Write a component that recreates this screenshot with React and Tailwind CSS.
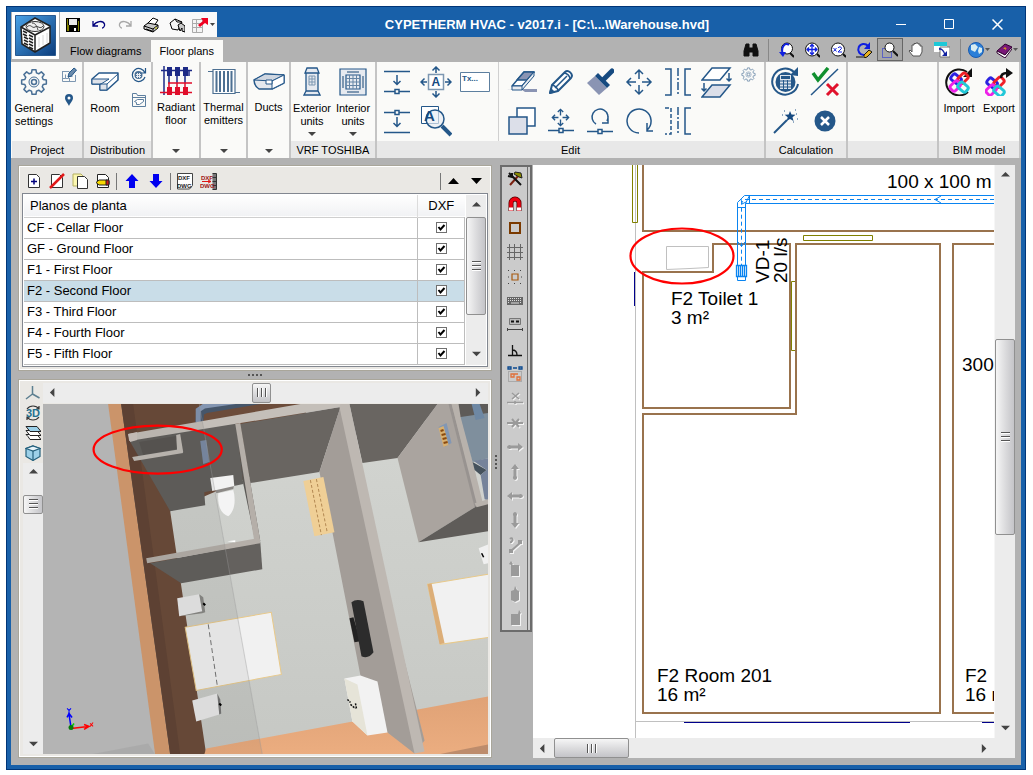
import { useState } from "react";

const floors = [
  "CF - Cellar Floor",
  "GF - Ground Floor",
  "F1 - First Floor",
  "F2 - Second Floor",
  "F3 - Third Floor",
  "F4 - Fourth Floor",
  "F5 - Fifth Floor",
];

function Svg({ w = 30, h = w, children, ...rest }) {
  return (
    <svg width={w} height={h} viewBox={`0 0 ${w} ${h}`} fill="none" stroke="#245789" strokeWidth="1.5" className="block shrink-0" {...rest}>
      {children}
    </svg>
  );
}

/* ---------- Ribbon buttons ---------- */

function IconButton({ label, className = "size-[39px]", children }) {
  return (
    <button type="button" aria-label={label} className={`flex items-center justify-center hover:bg-sky-100 ${className}`}>
      {children}
    </button>
  );
}

function BigButton({ icon, lines, arrow, className = "" }) {
  return (
    <button type="button" className={`flex flex-col items-center hover:bg-sky-100 ${className}`}>
      <span className="flex h-[40px] items-center justify-center">{icon}</span>
      {lines.map((line) => (
        <span key={line} className="block whitespace-nowrap">{line}</span>
      ))}
      {arrow && <Caret className="mt-1" />}
    </button>
  );
}

function Caret({ className = "" }) {
  return (
    <svg width="8" height="5" viewBox="0 0 8 5" className={`block ${className}`}>
      <path d="M0 0H8L4 4Z" fill="#444" />
    </svg>
  );
}

function Group({ title, className = "", children }) {
  return (
    <section className={`flex shrink-0 flex-col border-r-2 border-[#c4c4c4] bg-[#fafaf8] ${className}`}>
      <div className="flex flex-1">{children}</div>
      <h2 className="h-[17px] bg-[#e8e8e8] text-center leading-[18px]">{title}</h2>
    </section>
  );
}

function MenuGroup({ icon, lines, className }) {
  return (
    <section className={`flex shrink-0 flex-col items-center border-r-2 border-[#c4c4c4] bg-[#fafaf8] ${className}`}>
      <button type="button" className="flex w-full flex-1 flex-col items-center">
        <span className="flex h-[39px] items-center justify-center">{icon}</span>
        {lines.map((line) => (
          <span key={line} className="block">{line}</span>
        ))}
        <Caret className="mt-auto mb-1" />
      </button>
    </section>
  );
}

/* ---------- Ribbon icons ---------- */

// Eight flat teeth around the hub: outer radius 12.5, root radius 9.5
const gearPoints = Array.from({ length: 8 }, (_, i) =>
  [[-15, 9.5], [-9, 12.5], [9, 12.5], [15, 9.5]].map(([deg, r]) => {
    const a = ((i * 45 + deg) * Math.PI) / 180;
    return `${(14 + r * Math.sin(a)).toFixed(2)},${(14 - r * Math.cos(a)).toFixed(2)}`;
  }).join(" ")
).join(" ");

function Gear({ size = 28, color = "#4a7096" }) {
  return (
    <Svg w={size} viewBox="0 0 28 28" stroke={color} strokeLinejoin="round">
      <polygon points={gearPoints} />
      <circle cx="14" cy="14" r="5" strokeWidth="1" />
      <circle cx="14" cy="14" r="2.500" />
    </Svg>
  );
}

function PlanEdit() {
  return (
    <Svg w="16" stroke="#7d97b1" strokeWidth="1">
      <path d="M1.500 4.500h7M1.500 4v10.500h13V8M4.500 7.500v4h3v-2h4M1.500 11.500h3M8.500 14v-3" />
      <path d="M7 10l1-4 5-5 2.500 2-5 6z" fill="#6b8bab" stroke="#245789" />
    </Svg>
  );
}

function Pin() {
  return (
    <Svg w="10" h="14" stroke="none">
      <path d="M5 1a4 4 0 0 1 4 4c0 3-3 5-4 8C4 10 1 8 1 5a4 4 0 0 1 4-4z" fill="#245789" />
      <circle cx="5" cy="5" r="1.500" fill="#fff" />
    </Svg>
  );
}

function RoomIcon() {
  return (
    <Svg w="28" h="20" strokeLinejoin="round">
      <path d="M1 7L8 1H27V8L16 18H9V12H1z" fill="#fff" />
      <path d="M1 7H18L10 12H1zM9 12H16V18H9z" fill="#dfe3ea" strokeWidth="1" />
      <path d="M16 12L27 2" strokeWidth="1" />
    </Svg>
  );
}

function CalcSmall() {
  return (
    <Svg w="16" strokeWidth="1.200">
      <path d="M14 6A6.500 6.500 0 1 0 14 10M14.500 1v5h-4" />
      <circle cx="7.500" cy="8" r="4" fill="#4a7096" stroke="none" />
      <path d="M5 7.500h5M5 9.500h5M6.500 6v5M8.500 6v5" stroke="#e6eaf0" strokeWidth="1" />
    </Svg>
  );
}

function RoomSmall() {
  return (
    <Svg w="16" strokeWidth="1" stroke="#5d7f9f">
      <path d="M1.500 14.500v-13h4l1 2h8v11zM1.500 5.500h13" />
      <path d="M3.500 9.500l3-2h6v2l-4 3h-3v-2z" fill="#fff" />
    </Svg>
  );
}

function RadiantIcon() {
  return (
    <Svg w="32" h="32" strokeWidth="1.500">
      <path d="M1 4.500h31M4 0v29M29 4v6" stroke="#1d2a86" />
      <path d="M9 10v7M17 10v7M25 10v7" stroke="#1d2a86" />
      <path d="M8 17h24M9 17v4M17 17v4M25 17v4M0 26.500h32" stroke="#e00d2a" />
      <path d="M7 1h5v9H7zM15 1h5v9h-5zM23 1h5v9h-5z" fill="#1d2a86" stroke="none" />
      <path d="M7 21h5v8H7zM15 21h5v8h-5zM23 21h5v8h-5z" fill="#e00d2a" stroke="none" />
    </Svg>
  );
}

function RadiatorIcon() {
  return (
    <Svg w="32" h="28" strokeWidth="1.200" stroke="#4d7092">
      <path d="M0 3.500h5M27 24.500h5" />
      <path d="M5 1.500h22v24H5z" fill="#fff" />
      <path d="M8.500 3v21M12 3v21M16 3v21M20 3v21M23.500 3v21" strokeWidth="2" />
    </Svg>
  );
}

function DuctIcon() {
  return (
    <Svg w="32" h="18" strokeLinejoin="round">
      <path d="M1 7L12 1l19 1v8l-12 6H6C3 14 1 12 1 7z" fill="#e4e8ee" />
      <path d="M1 7L12 1l19 1-12 6z" fill="#cfd6e0" strokeWidth="1" />
      <path d="M19 8v8l12-6V2z" fill="#fff" strokeWidth="1" />
      <path d="M13 7h6v4h-6z" fill="#fff" strokeWidth="1" />
    </Svg>
  );
}

function ExteriorIcon() {
  return (
    <Svg w="18" h="30" strokeWidth="1.300">
      <path d="M4 1h10l2 5H2zM3 6h12v18H3zM3 24L1 28h16l-2-4z" fill="#e6eaf0" />
      <path d="M6 9h6v9H6zM9 9v9M6 12h6M6 15h6" strokeWidth="1" stroke="#7d97b1" />
    </Svg>
  );
}

function InteriorIcon() {
  return (
    <Svg w="28" strokeWidth="1.200">
      <path d="M1 1h26v26H1z" fill="#e6eaf0" />
      <path d="M4 8v12M24 8v12M8 4h12M8 24h12" strokeWidth="2" stroke="#7d97b1" />
      <path d="M7 7h14v14H7z" fill="#e6eaf0" />
      <path d="M10.500 7v14M14 7v14M17.500 7v14M7 10.500h14M7 14h14M7 17.500h14" strokeWidth="1" stroke="#6585a5" />
    </Svg>
  );
}

const InsertDown = () => (
  <Svg w="26">
    <path d="M0 2.500h26M13 6v9M9.500 12l3.500 3.500 3.500-3.500M0 22.500h11M15 22.500h11M11 20.500h4v4h-4z" />
  </Svg>
);

const InsertUp = () => (
  <Svg w="26">
    <path d="M0 4.500h11M15 4.500h11M11 2.500h4v4h-4zM13 9v9M9.500 15l3.500 3.500 3.500-3.500M0 24.500h26" />
  </Svg>
);

const MoveText = () => (
  <Svg w="32">
    <path d="M8.500 8.500h15v15h-15z" fill="#fff" stroke="#7d97b1" />
    <path d="M16 7V1M12.500 4.500L16 1l3.500 3.500M16 25v6M12.500 27.500L16 31l3.500-3.500M7 16H1M4.500 12.500L1 16l3.500 3.500M25 16h6M27.500 12.500L31 16l-3.500 3.500" />
    <text x="11.500" y="20" fontSize="12" fontWeight="bold" fontFamily="Liberation Sans, sans-serif" fill="#164a80" stroke="none">A</text>
  </Svg>
);

const TextBox = () => (
  <Svg w="30" h="20" strokeWidth="1">
    <path d="M.5 .5h29v19h-29z" fill="#fff" stroke="#5d7f9f" />
    <text x="2" y="9" fontSize="8" fontWeight="bold" fontFamily="Liberation Sans, sans-serif" fill="#245789" stroke="none">Tx...</text>
  </Svg>
);

const FindText = () => (
  <Svg w="32">
    <path d="M1.500 1.500h17v17h-17z" fill="#fff" strokeWidth="1" />
    <circle cx="15" cy="14" r="9" fill="#e8edf3" fillOpacity=".7" />
    <text x="4" y="15.500" fontSize="15" fontWeight="bold" fontFamily="Liberation Sans, sans-serif" fill="#164a80" stroke="none">A</text>
    <path d="M22 21l9 9" strokeWidth="4" />
  </Svg>
);

const Eraser = () => (
  <Svg w="30" h="24" strokeLinejoin="round">
    <path d="M0 19h30v3H18l-3-2z" fill="#8a94b3" stroke="none" />
    <path d="M5 16L17 2h10L15 16z" fill="#fff" />
    <path d="M10 10L17 2h10l-7 8z" fill="#8a94b3" />
    <path d="M5 16H15V20H5zM15 16L27 2V6L15 20" fill="#e8ebf0" strokeWidth="1" />
  </Svg>
);

const Pencil = () => (
  <Svg w="26" strokeLinejoin="round">
    <path d="M2 24l2-8L17 3c3-3 9 2 6 6L10 22z" fill="#fff" strokeWidth="2" />
    <path d="M7 19L19 7M16 4c3 0 6 3 6 6M4 16c2 0 6 3 6 6" />
    <path d="M2 24l1-4 3 3z" fill="#245789" />
  </Svg>
);

const Brush = () => (
  <Svg w="28">
    <path d="M1 15L9 8l12 12-8 7z" fill="#8a94b3" stroke="none" />
    <path d="M18 11l8-8" strokeWidth="5" strokeLinecap="round" stroke="#164a80" />
    <path d="M9 8l3-3 12 12-3 3z" fill="#164a80" stroke="none" />
  </Svg>
);

const Move = ({ s = 28 }) => (
  <Svg w={s} viewBox="0 0 28 28" strokeWidth={s < 20 ? 2 : 1.5}>
    <path d="M14 11V2M10 6l4-4 4 4M14 17v9M10 22l4 4 4-4M11 14H2M6 10l-4 4 4 4M17 14h9M22 10l4 4-4 4" />
  </Svg>
);

const Mirror = ({ dashed }) => (
  <Svg w="26" h="28">
    <path d="M0 1h6v26H0" strokeDasharray={dashed ? "4 2" : undefined} />
    <path d="M13 0v28" strokeDasharray="8 2 2 2" />
    <path d="M26 1h-6v26h6" />
  </Svg>
);

const CopyFloor = () => (
  <Svg w="32" h="32">
    <path d="M1 14L11 2h18L19 14z" fill="#fff" />
    <path d="M1 31l10-12h18L19 31z" fill="#dcdfe9" />
    <path d="M28 7v8M25.500 12.500L28 15l2.500-2.500M3 17v8M.500 22.500L3 25l2.500-2.500" />
  </Svg>
);

const CopyIcon = () => (
  <Svg w="28">
    <path d="M9 1h18v18H9z" fill="#fff" />
    <path d="M1 10h18v17H1z" fill="#dcdfe9" />
  </Svg>
);

const MoveNode = () => (
  <div className="flex flex-col items-center">
    <Move s={19} />
    <Svg w="26" h="7"><path d="M0 3.500h11M15 3.500h11M11 1.500h4v4h-4z" /></Svg>
  </div>
);

const RotateNode = () => (
  <Svg w="26" h="28">
    <path d="M9 17A8 8 0 1 1 20 14M21 9v7h-6" />
    <path d="M0 24.500h11M15 24.500h11M11 22.500h4v4h-4z" />
  </Svg>
);

const Rotate = () => (
  <Svg w="28">
    <path d="M14 26A12 12 0 1 1 22 23M22 16v8h7" />
  </Svg>
);

const CalcIcon = () => (
  <Svg w="30" strokeWidth="2">
    <path d="M27 17A13 13 0 1 1 23 5" />
    <path d="M27 0v9l-8-1z" fill="#245789" stroke="none" />
    <circle cx="14.500" cy="15" r="10" fill="#245789" stroke="none" />
    <path d="M9 8h11v14H9z" fill="#dde4ec" stroke="none" />
    <path d="M10 9h9v3h-9z" fill="#245789" stroke="none" />
    <path d="M9 14h11M9 17h11M9 20h11M12.500 13v9M16.500 13v9" strokeWidth="1" />
  </Svg>
);

const CheckIcon = () => (
  <Svg w="30">
    <path d="M1 28L28 2" />
    <path d="M3 6l5 7L18 1" stroke="#0f8f2e" strokeWidth="3.500" />
    <path d="M17 17l11 11M28 17L17 28" stroke="#e0122c" strokeWidth="3" />
  </Svg>
);

const Wand = () => (
  <Svg w="26">
    <path d="M1 25L14 12" strokeWidth="2" />
    <path d="M17 3l1.500 3.500 4 .3-3 2.500 1 3.700-3.500-2-3.300 2 1-3.800-3-2.500 4-.2z" fill="#164a80" stroke="none" />
    <path d="M11 3h1M22 2h1M24 11h1M9 7h1M23 6h1M20 14h1" strokeWidth="1" />
  </Svg>
);

const Cancel = () => (
  <Svg w="22" stroke="none">
    <circle cx="11" cy="11" r="10.500" fill="#245789" />
    <path d="M7 7l8 8M15 7l-8 8" stroke="#fff" strokeWidth="2.500" />
  </Svg>
);

function BimKnot() {
  return (
    <g fill="none" strokeWidth="2.500" transform="translate(-2 -2) scale(1.150)">
      <rect x="7" y="8" width="9" height="6" rx="2" transform="rotate(40 11 11)" stroke="#2b22e0" />
      <rect x="13" y="8" width="9" height="6" rx="2" transform="rotate(-45 17 11)" stroke="#f02028" />
      <rect x="6" y="14" width="9" height="6" rx="2" transform="rotate(-45 11 17)" stroke="#ee22e8" />
      <rect x="13" y="15" width="9" height="6" rx="2" transform="rotate(40 17 18)" stroke="#22c8d8" />
    </g>
  );
}

const ImportIcon = () => (
  <Svg w="28" stroke="#111" strokeWidth="2">
    <path d="M23 24A13 13 0 1 1 22 4" />
    <path d="M27 0v9h-9z" fill="#111" stroke="none" />
    <BimKnot />
  </Svg>
);

const ExportIcon = () => (
  <Svg w="28" stroke="#111" strokeWidth="2.500">
    <g transform="translate(-4 4)"><BimKnot /></g>
    <path d="M16 10c0-4 3-5 6-5" />
    <path d="M21 0l7 5-7 5z" fill="#111" stroke="none" />
  </Svg>
);

/* ---------- 16px toolbar icons ---------- */

const glyphs = {
  save: <g stroke="none"><path d="M1 1h14v14H1z" fill="#000" /><path d="M2 2h1v8H2zM13 4h1v10h-1zM2 8h2v6H2z" fill="#808000" /><path d="M4 2h8v6H4z" fill="#e8e8e8" /><path d="M9 11h2v3H9z" fill="#fff" /></g>,
  undo: <path d="M2 4v5h5M2.500 8.500C5 4 12 3 13.500 7c.5 2-1 4-2.500 4" stroke="#00007c" strokeWidth="1.300" />,
  redo: <path d="M14 4v5H9M13.500 8.500C11 4 4 3 2.500 7c-.5 2 1 4 2.500 4" stroke="#a8a8a8" strokeWidth="1.300" />,
  print: <g stroke="#000" strokeWidth="1"><path d="M4 7l6-6 5 2-4 6z" fill="#fff" /><path d="M1 9l4-3 10 2v3l-5 4-9-3z" fill="#c8c8c8" /><path d="M1 9l9 3 5-4M10 12v3M3 12l6 2" /><path d="M12 11h2" stroke="#cc0" /></g>,
  preview: <g stroke="#000" strokeWidth="1"><path d="M1 6l5-4 7 3-4 8-6-1z" fill="#f4f4f4" /><path d="M6 2l2 3 5 0" /><path d="M9 8l3-2 4 3v6l-3-1v-3l-2 3z" fill="#c8c8c8" /></g>,
  send: <g stroke="#aaa" strokeWidth="1"><path d="M.5 2.500h10v13H.5zM.5 6.500h10M.5 10.500h10M4.500 2.500v13" fill="#f4f4f4" /><path d="M6 8l5-4-2-3h7v7l-3-2-5 4z" fill="#f00020" stroke="none" /></g>,
  binoculars: <path d="M3 2h3v4h4V2h3l2 7v5h-5v-4H6v4H1V9z" fill="#111" stroke="#111" strokeWidth="1" />,
  zoomPrev: <g stroke="#111" strokeWidth="1"><circle cx="9" cy="6.500" r="5.500" fill="#fff" /><path d="M12 11l4 4" strokeWidth="2" /><path d="M11 3C7 0 3 5 4.500 11" stroke="#1020e0" strokeWidth="2" /><path d="M1 10h7l-3 5z" fill="#1020e0" stroke="none" /></g>,
  zoomAll: <g stroke="#111" strokeWidth="1"><circle cx="8" cy="7.500" r="6.500" fill="#fff" /><path d="M13 12l3 3" strokeWidth="2" /><path d="M8 3v9M3.500 7.500h9M6 4.500l2-2 2 2M6 10.500l2 2 2-2M5 5.500l-2 2 2 2M11 5.500l2 2-2 2" stroke="#1020e0" strokeWidth="1.300" /></g>,
  zoom2: <g stroke="#111" strokeWidth="1"><circle cx="8" cy="7.500" r="6.500" fill="#fff" /><path d="M13 12l3 3" strokeWidth="2" /><path d="M3.500 6l3 3.500M6.500 6l-3 3.500M8 6c1-2 4-1 3.500 .5L8 10h4" stroke="#1020e0" /></g>,
  redraw: <g><path d="M8 13A5.500 5.500 0 1 1 12 4" stroke="#1020e0" strokeWidth="2" /><path d="M14 0v7H8z" fill="#1020e0" stroke="none" /><path d="M8 13l5-5 3 2-5 5-3 1z" fill="#e8b020" stroke="#111" strokeWidth="1" /><path d="M0 15h7" stroke="#111" strokeWidth="1" /></g>,
  zoomWin: <g stroke="#111" strokeWidth="1"><path d="M.5 6.500h9v9h-9z" stroke="#1020e0" strokeDasharray="1 1" /><circle cx="7.500" cy="5.500" r="4.500" fill="#fff" /><path d="M11 9l5 5" strokeWidth="2" /></g>,
  hand: <path d="M5 14L1 9l1-1 2 2V3h2V1.500h2V1h2v1h2v2h2v6l-2 4z" fill="#fff" stroke="#555" strokeWidth="1" />,
  windows: <g stroke="none"><path d="M0 0h13v10H0z" fill="#fff" /><path d="M0 0h13v4H0z" fill="#1cc8d8" /><path d="M6 5h10v10H6z" fill="#fff" stroke="#777" strokeWidth="1" /><path d="M5 6c3 0 5 2 6 5l2-2v5H8l2-2C9 9 7 7 5 8z" fill="#1020a0" /></g>,
  globe: <g><circle cx="8" cy="8" r="7.500" fill="#2b7fd8" stroke="#1a5bb0" strokeWidth="1" /><path d="M3 3l4-1 3 3-3 5-4-2zM11 5l3 1v4l-3 2-1-3z" fill="#d8ecf0" stroke="none" /></g>,
  book: <g stroke="#300030" strokeWidth="1"><path d="M1 9l8-7 7 3-7 8z" fill="#7a1878" /><path d="M1 9l8 4 7-8v2l-7 9-8-5z" fill="#fff" /><path d="M8 7c0-2 3-1 1.500 .5" stroke="#fc0" /></g>,
  add: <g stroke="#333" strokeWidth="1"><path d="M2.500 1.500h8l3 3v10h-11z" fill="#fff" /><path d="M5 8.500h6M8 5.500v6" stroke="#00007c" strokeWidth="1.500" /></g>,
  remove: <g stroke="#333" strokeWidth="1"><path d="M2.500 1.500h8l3 3v10h-11z" fill="#fff" /><path d="M1 15L15 1" stroke="#e01818" strokeWidth="2.500" /></g>,
  copy: <g stroke="#333" strokeWidth="1"><path d="M1 1h8l2 2v10H1z" fill="#fbf7b0" stroke="#b5b060" /><path d="M5.500 3.500h7l3 3v9h-10z" fill="#fff" /></g>,
  edit: <g stroke="#222" strokeWidth="1"><path d="M2.500 1.500h8l3 3v10h-11z" fill="#fff" /><path d="M1 9.500l3-2.500h8l2 1v3l-2 1H4z" fill="#f7d800" /><path d="M11 7h3v5h-3z" fill="#d01818" /></g>,
  up: <path d="M8 1l6.500 7H11v7H5V8H1.500z" fill="#0000f0" stroke="none" />,
  down: <path d="M8 15L1.500 8H5V1h6v7h3.500z" fill="#0000f0" stroke="none" />,
};

function Glyph({ name, w = 16 }) {
  return <Svg w={w} viewBox="0 0 16 16">{glyphs[name]}</Svg>;
}

function DxfGlyph({ red }) {
  const color = red ? "#a01414" : "#222";
  return (
    <Svg w="17" h="17" strokeWidth="1">
      {red ? <path d="M12.500 .5h4v16h-4M12.500 4.500h4M12.500 8.500h4M12.500 12.500h4" fill="#777" stroke="#333" /> : <path d="M.5 .5h15v12l-3 3.500H.5z" fill="#fff" stroke="#444" />}
      {red && <path d="M2 8.500h9M8 7l3 1.500L8 10" stroke="#e01414" />}
      <g fontFamily="Liberation Sans, sans-serif" fontSize="6" fontWeight="bold" fill={color} stroke="none">
        <text x="1" y="7">DXF</text>
        <text x="0" y="15">DWG</text>
      </g>
    </Svg>
  );
}

/* ---------- Scrollbars ---------- */

const arrows = { up: "M0 6L5 1L10 6Z", down: "M0 2H10L5 7Z", left: "M6 0V10L1 5Z", right: "M2 0V10L7 5Z" };

function Arrow({ dir, color = "#444" }) {
  return (
    <svg width="9" height="9" viewBox="0 0 10 10" className="block">
      <path d={arrows[dir]} fill={color} />
    </svg>
  );
}

function VScroll({ before, thumb, after, className = "w-5" }) {
  return (
    <div className={`flex shrink-0 flex-col bg-[#ececec] ${className}`}>
      <button type="button" aria-label="Scroll up" className="flex h-5 items-center justify-center"><Arrow dir="up" /></button>
      <div className={before} />
      <div className={`flex flex-col items-center justify-center gap-[2px] rounded-xs border border-[#909090] bg-linear-to-r from-[#f6f6f6] via-[#dcdcde] to-[#c4c4c8] ${thumb}`}>
        {[0, 1, 2].map((i) => <span key={i} className="h-[2px] w-[9px] border-t border-[#555] bg-white" />)}
      </div>
      <div className={after} />
      <button type="button" aria-label="Scroll down" className="flex h-5 items-center justify-center"><Arrow dir="down" /></button>
    </div>
  );
}

function HScroll({ before, thumb, after }) {
  return (
    <div className="flex h-5 min-w-0 flex-1 bg-[#ececec]">
      <button type="button" aria-label="Scroll left" className="flex w-5 items-center justify-center"><Arrow dir="left" /></button>
      <div className={before} />
      <div className={`flex items-center justify-center gap-[2px] rounded-xs border border-[#909090] bg-linear-to-b from-[#f6f6f6] via-[#dcdcde] to-[#c4c4c8] ${thumb}`}>
        {[0, 1, 2].map((i) => <span key={i} className="h-[9px] w-[2px] border-l border-[#555] bg-white" />)}
      </div>
      <div className={after} />
      <button type="button" aria-label="Scroll right" className="flex w-5 items-center justify-center"><Arrow dir="right" /></button>
    </div>
  );
}

/* ---------- Header ---------- */

function Header() {
  const [tab, setTab] = useState("Floor plans");
  return (
    <header className="flex bg-[#b2b2b2]">
      <div className="w-[49px] border-t-5 border-[#1860a9] pl-px">
        <button type="button" aria-label="Application menu" className="flex size-[47px] items-center justify-center bg-white">
          <svg width="41" height="41" viewBox="0 0 41 41">
            <defs>
              <linearGradient id="app" x2="1" y2="1"><stop stopColor="#4ba3e8" /><stop offset="1" stopColor="#0b3c7c" /></linearGradient>
            </defs>
            <path d="M.5 .5h40v40H.5z" fill="url(#app)" stroke="#2a5a90" />
            <path d="M6 12L20 3l15 8v17L20 37 7 29z" fill="#fff" stroke="#222" strokeWidth="1.500" strokeLinejoin="round" />
            <path d="M6 12l14 8v17M20 20l15-8" fill="none" stroke="#222" strokeWidth="1.500" />
            <ellipse cx="20" cy="11.500" rx="9" ry="5" fill="#eee" stroke="#333" />
            <path d="M12 12c4-4 5 2 8 0s5 3 8-1M17 8c4 0 5 4 6 7" fill="none" stroke="#444" />
            <path d="M8 16l4 2M14 20l4 2M8 19l4 2M14 23l4 2M9 22l4 2M14 26l4 2M9 25l4 2M14 29l4 2M9 28l4 2M14 32l4 2" stroke="#222" strokeWidth="1.500" />
            <path d="M24 22v10M28 20v10M32 18v10" stroke="#d8d8d8" />
          </svg>
        </button>
      </div>
      <div className="min-w-0 flex-1">
        <div className="flex h-[30px] bg-[#1860a9]">
          <div className="mt-[5px] flex w-[157px] items-center bg-[#f9f9f9]">
            {["save", "undo", "redo", "print", "preview"].map((name) => (
              <IconButton key={name} label={name} className="h-6 w-[26px]"><Glyph name={name} /></IconButton>
            ))}
            <button type="button" aria-label="Export list" className="flex items-center gap-[2px] pl-[2px]">
              <Glyph name="send" />
              <svg width="5" height="4" viewBox="0 0 5 4"><path d="M0 0h5L2.500 3z" fill="#444" /></svg>
            </button>
          </div>
          <h1 className="min-w-0 flex-1 truncate pt-[5px] text-center text-[13px] leading-[26px] font-bold text-white">
            CYPETHERM HVAC - v2017.i - [C:\...\Warehouse.hvd]
          </h1>
          <div className="flex pt-[4px]">
            <IconButton label="Minimize" className="h-[26px] w-12"><Svg w="11" stroke="#fff" strokeWidth="1"><path d="M0 5.500h10" /></Svg></IconButton>
            <IconButton label="Maximize" className="h-[26px] w-12"><Svg w="11" stroke="#fff" strokeWidth="1"><path d="M.5 .5h9v9h-9z" /></Svg></IconButton>
            <IconButton label="Close" className="h-[26px] w-12"><Svg w="11" stroke="#fff"><path d="M.5 .5l10 10M10.500 .5l-10 10" /></Svg></IconButton>
          </div>
        </div>
        <div className="flex h-[25px]">
          <nav className="flex items-end pl-px">
            {["Flow diagrams", "Floor plans"].map((name) => (
              <button
                key={name}
                type="button"
                onClick={() => setTab(name)}
                className={`h-[22px] px-[9px] text-[11px] ${tab === name ? "bg-[#fafaf8]" : ""}`}
              >
                {name}
              </button>
            ))}
          </nav>
          <div className="ml-auto flex items-center">
            <IconButton label="Search" className="h-[23px] w-[26px]"><Glyph name="binoculars" /></IconButton>
            <span className="mx-1 h-[22px] w-px bg-[#888]" />
            {["zoomPrev", "zoomAll", "zoom2", "redraw", "zoomWin", "hand", "windows"].map((name) => (
              <IconButton
                key={name}
                label={name}
                className={name === "zoomWin" ? "h-[23px] w-[26px] border border-[#666] bg-[#a6a6a6]" : "h-[23px] w-[26px]"}
              >
                <Glyph name={name} />
              </IconButton>
            ))}
            <span className="mr-1 ml-[5px] h-[22px] w-px bg-[#888]" />
            {["globe", "book"].map((name) => (
              <button key={name} type="button" aria-label={name} className="flex w-[28px] items-center justify-center gap-px">
                <Glyph name={name} />
                <svg width="5" height="4" viewBox="0 0 5 4"><path d="M0 0h5L2.500 3z" fill="#555" /></svg>
              </button>
            ))}
          </div>
        </div>
      </div>
    </header>
  );
}

function Ribbon() {
  return (
    <div className="flex h-[96px] overflow-hidden bg-[#fafaf8] pl-px text-[11px] leading-[13px]">
      <Group title="Project" className="w-[72px]">
        <BigButton icon={<Gear />} lines={["General", "settings"]} className="w-[44px]" />
        <div className="flex flex-col">
          <IconButton label="Edit plan" className="size-[25px]"><PlanEdit /></IconButton>
          <IconButton label="Location" className="size-[25px]"><Pin /></IconButton>
        </div>
      </Group>
      <Group title="Distribution" className="w-[69px]">
        <BigButton icon={<RoomIcon />} lines={["Room"]} className="w-[42px]" />
        <div className="flex flex-col">
          <IconButton label="Recalculate room" className="size-[25px]"><CalcSmall /></IconButton>
          <IconButton label="Room library" className="size-[25px]"><RoomSmall /></IconButton>
        </div>
      </Group>
      <MenuGroup icon={<RadiantIcon />} lines={["Radiant", "floor"]} className="w-[48px]" />
      <MenuGroup icon={<RadiatorIcon />} lines={["Thermal", "emitters"]} className="w-[47px]" />
      <MenuGroup icon={<DuctIcon />} lines={["Ducts"]} className="w-[43px]" />
      <Group title="VRF TOSHIBA" className="w-[86px]">
        <BigButton icon={<ExteriorIcon />} lines={["Exterior", "units"]} arrow className="w-[42px]" />
        <BigButton icon={<InteriorIcon />} lines={["Interior", "units"]} arrow className="w-[40px]" />
      </Group>
      <Group title="Edit" className="w-[389px]">
        <div className="grid grid-cols-3 content-start">
          <IconButton label="Insert below"><InsertDown /></IconButton>
          <IconButton label="Move text"><MoveText /></IconButton>
          <IconButton label="Text box"><TextBox /></IconButton>
          <IconButton label="Insert above"><InsertUp /></IconButton>
          <IconButton label="Find text"><FindText /></IconButton>
        </div>
        <span className="mr-[3px] ml-1 w-px bg-[#d0d0d0]" />
        <div className="grid grid-cols-6 content-start">
          <IconButton label="Delete"><Eraser /></IconButton>
          <IconButton label="Edit"><Pencil /></IconButton>
          <IconButton label="Match properties"><Brush /></IconButton>
          <IconButton label="Move"><Move /></IconButton>
          <IconButton label="Mirror"><Mirror /></IconButton>
          <IconButton label="Copy between floors"><CopyFloor /></IconButton>
          <IconButton label="Copy"><CopyIcon /></IconButton>
          <IconButton label="Move node"><MoveNode /></IconButton>
          <IconButton label="Rotate node"><RotateNode /></IconButton>
          <IconButton label="Rotate"><Rotate /></IconButton>
          <IconButton label="Mirror copy"><Mirror dashed /></IconButton>
        </div>
        <IconButton label="Options" className="size-[25px]"><Gear size={15} color="#6a89a8" /></IconButton>
      </Group>
      <Group title="Calculation" className="w-[82px]">
        <div className="grid grid-cols-2 content-start">
          <IconButton label="Calculate"><CalcIcon /></IconButton>
          <IconButton label="Check"><CheckIcon /></IconButton>
          <IconButton label="Wizard"><Wand /></IconButton>
          <IconButton label="Cancel"><Cancel /></IconButton>
        </div>
      </Group>
      <Group title="" className="min-w-0 flex-1 shrink" />
      <Group title="BIM model" className="w-[82px]">
        <BigButton icon={<ImportIcon />} lines={["Import"]} className="w-[40px]" />
        <BigButton icon={<ExportIcon />} lines={["Export"]} className="w-[40px]" />
      </Group>
    </div>
  );
}

/* ---------- Floor list ---------- */

function FloorList() {
  const [selected, setSelected] = useState(3);
  return (
    <section className="border border-[#a9a69a] bg-[#eae8e4]">
      <div className="border border-white p-[2px]">
        <div className="flex h-[24px] items-center">
          {["add", "remove", "copy", "edit"].map((name) => (
            <IconButton key={name} label={name} className="h-[22px] w-[23px]"><Glyph name={name} /></IconButton>
          ))}
          <span className="mx-[2px] h-[17px] w-px bg-[#777]" />
          <IconButton label="Move up" className="h-[22px] w-[25px]"><Glyph name="up" /></IconButton>
          <IconButton label="Move down" className="h-[22px] w-[23px]"><Glyph name="down" /></IconButton>
          <span className="mx-[3px] h-[17px] w-px bg-[#777]" />
          <IconButton label="DXF templates" className="h-[22px] w-[23px]"><DxfGlyph /></IconButton>
          <IconButton label="DXF layers" className="h-[22px] w-[23px]"><DxfGlyph red /></IconButton>
          <span className="ml-auto h-[17px] w-px bg-[#777]" />
          <IconButton label="Previous floor" className="h-[22px] w-[24px]"><Svg w="11" h="6" stroke="none"><path d="M0 6h11L5.500 0z" fill="#000" /></Svg></IconButton>
          <IconButton label="Next floor" className="h-[22px] w-[23px]"><Svg w="11" h="6" stroke="none"><path d="M0 0h11L5.500 6z" fill="#000" /></Svg></IconButton>
        </div>
        <div className="flex border border-[#828790] bg-white p-px">
          <table className="flex-1 table-fixed border-collapse text-[13px]">
            <thead>
              <tr className="h-[22px] border-b border-[#cfcfcf] bg-linear-to-b from-white to-[#f1f2f4]">
                <th className="border-r border-[#dcdcdc] pl-[6px] text-left font-normal">Planos de planta</th>
                <th className="w-[47px] font-normal">DXF</th>
              </tr>
            </thead>
            <tbody>
              {floors.map((floor, i) => (
                <tr
                  key={floor}
                  onClick={() => setSelected(i)}
                  className={`h-[21px] border-b border-[#bdbdbd] ${i === selected ? "bg-[#c9dde8]" : ""}`}
                >
                  <td className="border-r border-[#bdbdbd] pl-[3px] leading-[20px]">{floor}</td>
                  <td className="border-r border-[#bdbdbd]">
                    <span className="relative mx-auto block size-[11px]">
                      <input type="checkbox" defaultChecked aria-label={`DXF ${floor}`} className="peer block size-[11px] appearance-none border border-[#707070] bg-white" />
                      <svg width="11" height="11" viewBox="0 0 11 11" className="pointer-events-none absolute inset-0 hidden peer-checked:block">
                        <path d="M2.500 5l2 2.500L8.500 3" fill="none" stroke="#000" strokeWidth="2" />
                      </svg>
                    </span>
                  </td>
                </tr>
              ))}
            </tbody>
          </table>
          <VScroll before="h-[2px]" thumb="h-[98px]" after="flex-1" className="ml-px w-5" />
        </div>
      </div>
    </section>
  );
}

/* ---------- 3D view ---------- */

function Scene() {
  return (
    <svg viewBox="43 404 445 350" preserveAspectRatio="xMinYMin slice" className="absolute inset-0 size-full bg-[#b4b4b4]">
      <defs>
        <linearGradient id="floor" x2="0" y2="1"><stop stopColor="#d3d5d1" /><stop offset="1" stopColor="#c6c8c4" /></linearGradient>
        <linearGradient id="ground" x2="0" y2="1"><stop stopColor="#e0a276" /><stop offset="1" stopColor="#ebad80" /></linearGradient>
      </defs>
      <path d="M90 754L148 743 155 754z" fill="#aaa" />
      {/* outer wall */}
      <path d="M108 404H121L170 754H155z" fill="#cb946a" />
      <path d="M121 404H310L260 500 206 754H170z" fill="#6c4c3a" />
      <path d="M121 404H133L180 754H170z" fill="#624536" />
      {/* floors */}
      <path d="M170 511L242 480 330 440 488 404V754H206z" fill="url(#floor)" />
      <path d="M206 748L488 696V754H204z" fill="url(#ground)" />
      <path d="M437 754L488 744V754z" fill="#bd8c6c" />
      {/* toilet walls */}
      <path d="M129 440L236 422 243 484 204 492 205 505 170 511z" fill="#62605d" />
      <path d="M236 424L240 424 260 541 255 541 243 484z" fill="#5a5855" />
      <path d="M139 442L176 436 177 449 143 455z" fill="#5a5754" />
      <path d="M176 435L180 434 183 452 177 453z" fill="#c1bcb6" />
      <path d="M132 457L181 449 183 453 134 461z" fill="#c1bcb6" />
      <path d="M200 441L206 440 209 462 203 464z" fill="#7c8ca5" />
      <path d="M240 424L340 407 319 472 250 483z" fill="#696561" />
      <path d="M235 424L240 423 260 541 254 541z" fill="#b5afa9" />
      {/* duct over the corridor */}
      <path d="M199 423L200 412 206 409 260 400" fill="none" stroke="#46566a" strokeWidth="8" />
      <path d="M198 422L198 410 204 406 260 398" fill="none" stroke="#8496b2" strokeWidth="5" />
      <path d="M128 434L300 404H349L340 407 129 441z" fill="#c4bfb9" />
      <path d="M128 434L137 432 137 440 130 442z" fill="#cdc4be" />
      <path d="M150 563L260 542 262 569 181 583z" fill="#64615e" />
      <path d="M146 558L258 538 260 543 147 563z" fill="#b5afa9" />
      {/* partition between rooms */}
      <path d="M340 407L319 472 332 532 360 675 387 732 414 753 424 740z" fill="#a39d98" />
      <path d="M349 404H437L397 458 362 463z" fill="#696561" />
      <path d="M340 404H349L424 751 414 753 339 407z" fill="#beb8b2" />
      <path d="M437 404L397 458 418 542 476 506 452 404z" fill="#aaa49f" />
      <path d="M448 404H451L478 506 474 507z" fill="#989390" />
      <path d="M451 404H458L483 506 477 507z" fill="#b8b2ac" />
      <path d="M458 404H488V420L460 417z" fill="#5e5b58" />
      <path d="M460 417L488 413V458L472 462z" fill="#7f8f9d" />
      <path d="M471 404H479L484 418 475 420z" fill="#6e88a4" />
      <path d="M472 462L486 470 480 475 474 470z" fill="#46525c" />
      <path d="M473 461L488 458V500L484 499 480 475 486 470z" fill="#76839a" />
      <path d="M476 506L488 501V531L418 542z" fill="#5f5c59" />
      <path d="M474 503L488 499V504L476 507z" fill="#b8b2ac" />
      {/* wall unit */}
      <path d="M438 427L446 423 451 443 444 447z" fill="#8297b4" />
      <path d="M438 428L443 426 448 445 443 447z" fill="#d8b070" />
      <path d="M440 431l3-1M441 435l4-1M442 439l4-1M443 443l4-1" stroke="#8a4a10" strokeWidth="2" />
      {/* toilet */}
      <path d="M215 488L234 484 233 489 216 493z" fill="#8b8885" />
      <path d="M210 478L233 475 234 486 212 491z" fill="#f2f2f2" />
      <path d="M218 493L233 490C236 500 234 512 228 516C221 514 217 506 218 493z" fill="#f4f4f4" />
      <path d="M227 541l8-1v2z" fill="#fff" />
      {/* furniture */}
      <path d="M177 598L199 594 202 612 179 616z" fill="#e8e8e8" />
      <path d="M199 594L203 597 205 612 202 613 179 616 202 611z" fill="#8a8a86" />
      <path d="M192 700L217 693 219 714 196 721z" fill="#e8e8e8" />
      <path d="M217 693L220 699 221 713 219 714z" fill="#777" />
      <path d="M203 603l2 2M219 703l2 2" stroke="#000" strokeWidth="2" />
      <path d="M185 627L271 612 281 674 196 690z" fill="#f1f1f1" stroke="#e8c98a" />
      <path d="M208 624L217 685" stroke="#777" strokeDasharray="5 3" />
      <path d="M303 481L323 477 334 532 314 536z" fill="#efcf96" />
      <path d="M310 480L321 535M316 479L327 533" stroke="#b48a54" strokeDasharray="3 2" />
      <path d="M349 618L353 617 360 641 354 642z" fill="#222" />
      <path d="M351 602Q356 598 363 601L373 652Q368 659 361 656z" fill="#2c2c2c" />
      <path d="M344 678L360 675 377 681 387 732 367 735 352 721z" fill="#f2f2f2" />
      <path d="M344 678L357 684 367 735 352 721z" fill="#e6e4d8" />
      <path d="M347 699l3 3M350 704l5 4M355 703l1 5" stroke="#111" strokeWidth="1.500" strokeDasharray="2 1" />
      <path d="M427 584L488 574V637L440 644z" fill="#f1f1f1" stroke="#e8c98a" />
      <path d="M427 584L431 583 444 643 439 644z" fill="#dcae78" />
      <path d="M478 548L488 544V563L483 564z" fill="#f0f0f0" />
      <path d="M481 553l2 4" stroke="#000" strokeWidth="1.500" />
      {/* glass facade */}
      <path d="M199 404L262 754H170L121 404z" fill="#000" fillOpacity=".05" />
      <path d="M199 404L262 754" stroke="#999" strokeOpacity=".4" />
      {/* axes */}
      <path d="M71 727L69 714M67 717l2-4 3 4" stroke="#00f" strokeWidth="1.500" fill="none" />
      <path d="M71 728L88 726M84 724l5 2-5 3" stroke="#f00" strokeWidth="1.500" fill="none" />
      <path d="M71 727l3-4" stroke="#0c0" strokeWidth="1.500" />
      <circle cx="71" cy="727" r="2.500" fill="#087a08" />
      <path d="M67 708l2 2 2-2M69 710v3" stroke="#00f" fill="none" />
      <path d="M90 723l3 3M93 722l-3 4" stroke="#f00" />
      <ellipse cx="157.500" cy="449.500" rx="64" ry="24" fill="none" stroke="#f00" strokeWidth="2.200" />
    </svg>
  );
}

function View3D() {
  return (
    <section className="flex flex-1 flex-col border border-[#a9a69a] bg-[#eae8e4]">
      <div className="flex flex-1 border border-white p-[2px] pl-[3px]">
        <div className="flex w-5 flex-col">
          <IconButton label="Axes" className="size-5"><Svg w="16" stroke="#5d7f90"><path d="M7.500 1v8L1 14M7.500 9l7 4" /></Svg></IconButton>
          <IconButton label="Orbit" className="size-5">
            <Svg w="16" stroke="#333">
              <path d="M2 4C5 0 11 0 14 4M14 1v3h-3M14 12c-3 4-9 4-12 0M2 15v-3h3" strokeWidth="1.200" />
              <text x="1" y="12" fontSize="11" fontWeight="bold" fontFamily="Liberation Sans, sans-serif" fill="#24708f" stroke="none">3D</text>
            </Svg>
          </IconButton>
          <IconButton label="Layers" className="size-5">
            <Svg w="16" stroke="#222" strokeWidth="1">
              <path d="M3 11.500L1 9.500h11l4 5H5z" fill="#fff" />
              <path d="M3 8l-2-2.500h11l4 5H5z" fill="#fff" />
              <path d="M1 1.500h11l4 5H5z" fill="#9cd0e8" />
            </Svg>
          </IconButton>
          <IconButton label="Solid view" className="size-5">
            <Svg w="16" stroke="#24607c" strokeWidth="1.200">
              <path d="M8 1l7 2.500v8L8 15.500 1 11.500v-8z" fill="#9cd0e8" />
              <path d="M1 3.500L8 6l7-2.500L8 1z" fill="#e8f4fa" />
              <path d="M8 6v9.500" />
            </Svg>
          </IconButton>
          <VScroll before="h-[12px]" thumb="h-[19px]" after="flex-1" className="w-5 flex-1" />
        </div>
        <div className="flex min-w-0 flex-1 flex-col">
          <div className="flex">
            <HScroll before="grow-[189]" thumb="w-[19px]" after="grow-[197]" />
          </div>
          <div className="relative mt-px flex-1 overflow-hidden">
            <Scene />
          </div>
        </div>
      </div>
    </section>
  );
}

/* ---------- Drawing aids toolbar ---------- */

const aids = [
  ["Settings", <g key="a"><path d="M3 14L12 4" stroke="#7a2010" strokeWidth="2" /><path d="M8 1l6 1 1 5-3-1-5-3z" fill="#8a8a00" stroke="#222" strokeWidth="1" /><path d="M2 2l3 3 9 9M1 5l4 1V2" stroke="#111" strokeWidth="2" /></g>],
  ["Snap", <g key="a"><path d="M4 15V7a4 4 0 0 1 8 0v8" stroke="#500" strokeWidth="5" /><path d="M4 15V7a4 4 0 0 1 8 0v8" stroke="#f00010" strokeWidth="3.500" /><path d="M2 13h4M10 13h4" stroke="#fff" strokeWidth="3" /></g>],
  ["Ortho frame", <path key="a" d="M3 3h10v10H3z" stroke="#7b3a00" strokeWidth="2" />],
  ["Grid", <path key="a" d="M2.500 0v16M7.500 0v16M13.500 0v16M0 3.500h16M0 8.500h16M0 13.500h16" stroke="#666" strokeWidth="1" />],
  ["Snap to grid", <g key="a"><path d="M5 5h6v6H5z" stroke="#a85a10" strokeWidth="1.200" /><path d="M1 1.500h14M1 14.500h14M1 8h1M14 8h1" stroke="#444" strokeWidth="1" strokeDasharray="1 5" /></g>],
  ["Keyboard", <g key="a"><path d="M0 4h16v8H0z" fill="#666" stroke="none" /><path d="M1 5.500h14M1 7.500h14M1 9.500h2M13 9.500h2" stroke="#ddd" strokeWidth="1" strokeDasharray="1 1" /><path d="M4 10h8" stroke="#ddd" strokeWidth="1" /></g>],
  ["Dimension", <g key="a"><path d="M2.500 1.500h11v6h-11z" stroke="#777" fill="#bbb" strokeWidth="1" /><path d="M4 4.500h3M9 4.500h3" stroke="#111" strokeWidth="2" /><path d="M.5 12.500h15M.5 11v3M15.500 11v3" stroke="#444" strokeWidth="1" /></g>],
  ["Right angle", <path key="a" d="M5.500 3v10M1 13.500h14M5 8c3 0 5 2 5 5" stroke="#111" strokeWidth="1.300" />],
  ["Object tracking", <g key="a" strokeWidth="1.300"><path d="M1 1h3v2H1zM12 1h3v2h-3zM6 2h4" stroke="#0b4a90" /><path d="M4 8h3v3H4zM10 11h3v3h-3zM7 8h4" stroke="#e0703a" /><path d="M1.500 5.500h13v10h-13z" stroke="#888" strokeDasharray="1 1" strokeWidth="1" /></g>],
  ["Intersection", <path key="a" d="M5 2l7 6M12 2L5 8M0 11.500h16M8 10v3" stroke="#9a9a9a" />],
  ["Break", <path key="a" d="M0 8h16M5 4l7 8M12 4l-7 8" stroke="#9a9a9a" strokeWidth="2" />],
  ["Node right", <path key="a" d="M0 8a2.500 2.500 0 0 1 4-1.500h7V4l5 4-5 4V9.500H4A2.500 2.500 0 0 1 0 8z" fill="#9a9a9a" stroke="none" />],
  ["Node up", <path key="a" d="M8 16a2.500 2.500 0 0 1-1.500-4V5H4l4-5 4 5H9.500v7A2.500 2.500 0 0 1 8 16z" fill="#9a9a9a" stroke="none" />],
  ["Node left", <path key="a" d="M16 8a2.500 2.500 0 0 1-4 1.500H5V12L0 8l5-4v2.500h7A2.500 2.500 0 0 1 16 8z" fill="#9a9a9a" stroke="none" />],
  ["Node down", <path key="a" d="M8 0a2.500 2.500 0 0 1 1.500 4v7H12l-4 5-4-5h2.500V4A2.500 2.500 0 0 1 8 0z" fill="#9a9a9a" stroke="none" />],
  ["Query link", <g key="a" stroke="#9a9a9a"><path d="M3 2c2-2 4 1 1 3v1M4 14l9-8" strokeWidth="2" /><path d="M11 3h4v4h-4zM2 12h4v4H2z" fill="#9a9a9a" stroke="none" /></g>],
  ["Shaft left", <path key="a" d="M5 4h7v11H4V4L2 3l2-3 2 3z" fill="#9a9a9a" stroke="none" />],
  ["Shaft", <path key="a" d="M4 5l3-1 1-4 2 4 2 1v9l-4 2-4-2z" fill="#9a9a9a" stroke="none" />],
  ["Shaft right", <path key="a" d="M4 4h7l1-4 2 3-1 1v11H4z" fill="#9a9a9a" stroke="none" />],
];

function AidsBar() {
  return (
    <div className="flex h-[467px] w-[32px] shrink-0 border-2 border-[#6c6c6c] bg-[#cbcbcb]">
      <div className="flex flex-1 flex-col items-center border-r border-[#6c6c6c]">
        {aids.map(([label, icon], i) => (
          <IconButton key={label} label={label} className={i > 8 ? "w-full flex-1 drop-shadow-[1px_1px_0_#f4f4f4]" : "w-full flex-1"}>
            <Svg w="16">{icon}</Svg>
          </IconButton>
        ))}
      </div>
      <div className="w-[2px]" />
    </div>
  );
}

/* ---------- Plan view ---------- */

function Plan() {
  return (
    <svg viewBox="533 165 461 573" preserveAspectRatio="xMinYMin slice" className="absolute inset-0 size-full bg-white" fill="none">
      <path d="M635.500 165V738M635.500 721.500H994" stroke="#c0c0c0" />
      <path d="M632.500 160V222.500H637.500V160M791.500 281.500H795.500V350.500H791.500zM803.500 235.500H872.500V240.500H803.500z" stroke="#808000" />
      <path d="M634.500 272V306M684 722.500H910M982 722.500H994" stroke="#00008b" />
      <g stroke="#99734d" strokeWidth="2">
        <path d="M643 165V231H1000" />
        <path d="M642 272H713V244H790V408H643V272" />
        <path d="M796 244H940V713H643V414H796z" />
        <path d="M1000 244H953V713H1000" />
      </g>
      <path d="M666.500 246.500H708.500V267.500L690 268.500 666.500 269.500z" stroke="#c0c0c0" />
      <g stroke="#0a84f0">
        <path d="M994 195.500H744.500L737.500 202.500V265M994 203.500H745.500V265M745.500 203.500L749.500 195.500M737.500 207.500H745.500M749.500 195.500V203.500" />
        <path d="M994 199.500H744L741.500 203V266" strokeDasharray="4 3" />
        <path d="M941 196L935 199.500 941 203M738 242l3.500 4.500 3.500-4.500M741 199l1 5 4-2" />
        <path d="M736.500 265.500H746.500V276.500H736.500zM738.500 265V277M740.500 265V277M742.500 265V277M744.500 265V277" strokeWidth="1.300" />
        <path d="M737.500 277V280.500H745.500V277" />
      </g>
      <g fill="#000" fontFamily="Liberation Sans, Arial, sans-serif" fontSize="19">
        <text x="887" y="188">100 x 100 m</text>
        <text x="962" y="371">300</text>
        <text x="671" y="305">F2 Toilet 1</text>
        <text x="671" y="324">3 m²</text>
        <text x="657" y="682">F2 Room 201</text>
        <text x="657" y="701">16 m²</text>
        <text x="965" y="682">F2</text>
        <text x="965" y="701">16 m²</text>
        <text transform="translate(769 283) rotate(-90)">VD-1</text>
        <text transform="translate(787 283) rotate(-90)">20 l/s</text>
      </g>
      <ellipse cx="682" cy="256" rx="51.500" ry="27.500" stroke="#f00" strokeWidth="2.200" />
    </svg>
  );
}

function PlanView() {
  return (
    <section className="flex min-w-0 flex-1 flex-col bg-[#ececec]">
      <div className="flex flex-1">
        <div className="relative flex-1 overflow-hidden">
          <Plan />
        </div>
        <VScroll before="grow-[154]" thumb="h-[196px]" after="grow-[183]" className="w-[21px] border-l border-[#f6f6f6]" />
      </div>
      <div className="flex pr-[21px]">
        <HScroll before="w-px" thumb="w-[75px]" after="flex-1" />
      </div>
    </section>
  );
}

function Dots({ className }) {
  return (
    <div className={`flex items-center justify-center gap-[2px] ${className}`}>
      {[0, 1, 2, 3].map((i) => <span key={i} className="size-[2px] bg-[#555]" />)}
    </div>
  );
}

export default function App() {
  return (
    <div className="flex min-h-screen bg-white pt-[6px] pr-[7px] pb-[5px] pl-[6px] font-['Liberation_Sans',Arial,sans-serif] text-black">
      <div className="flex min-w-0 flex-1 border border-[#003578]">
        <div className="flex min-w-0 flex-1 flex-col border-x-4 border-b-4 border-[#1860a9] bg-[#b2b2b2]">
          <Header />
          <Ribbon />
          <main className="flex flex-1 pt-[7px] pr-[6px] pb-[7px] pl-[7px]">
            <div className="flex w-[474px] shrink-0 flex-col">
              <FloorList />
              <Dots className="h-[8px]" />
              <View3D />
            </div>
            <div className="flex w-[8px] shrink-0 items-center">
              <Dots className="w-full flex-col" />
            </div>
            <AidsBar />
            <div className="w-px" />
            <PlanView />
          </main>
        </div>
      </div>
    </div>
  );
}
